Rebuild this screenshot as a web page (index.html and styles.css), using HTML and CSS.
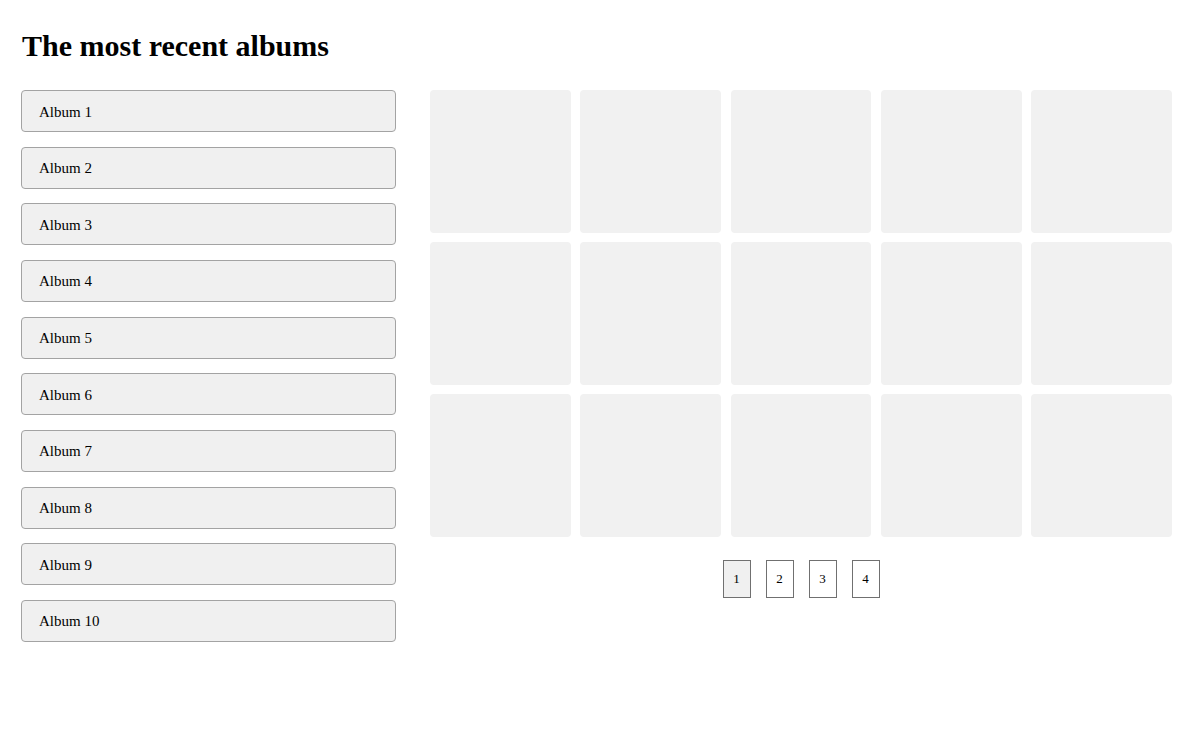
FILE: index.html
```html
<!DOCTYPE html>
<html>
<head>
<meta charset="utf-8">
<link rel="stylesheet" href="styles.css">
</head>
<body>
<div class="page">
  <h1 class="title">The most recent albums</h1>
  <div class="layout">
    <div class="album-list">
      <button class="album-btn">Album 1</button>
      <button class="album-btn">Album 2</button>
      <button class="album-btn">Album 3</button>
      <button class="album-btn">Album 4</button>
      <button class="album-btn">Album 5</button>
      <button class="album-btn">Album 6</button>
      <button class="album-btn">Album 7</button>
      <button class="album-btn">Album 8</button>
      <button class="album-btn">Album 9</button>
      <button class="album-btn">Album 10</button>
    </div>
    <div class="gallery">
      <div class="grid">
        <div class="tile"></div><div class="tile"></div><div class="tile"></div><div class="tile"></div><div class="tile"></div>
        <div class="tile"></div><div class="tile"></div><div class="tile"></div><div class="tile"></div><div class="tile"></div>
        <div class="tile"></div><div class="tile"></div><div class="tile"></div><div class="tile"></div><div class="tile"></div>
      </div>
      <div class="pager">
        <button class="page-btn active">1</button>
        <button class="page-btn">2</button>
        <button class="page-btn">3</button>
        <button class="page-btn">4</button>
      </div>
    </div>
  </div>
</div>
</body>
</html>
```
FILE: styles.css
```css
html, body {
  margin: 0;
  padding: 0;
  background: #fff;
}
body {
  font-family: "Liberation Serif", "Times New Roman", serif;
  color: #000;
}
.page {
  padding: 22px 23px 0 22px;
}
.title {
  margin: 0 0 28px 0;
  font-size: 30px;
  font-weight: bold;
  line-height: 47px;
  height: 40px;
}
.layout {
  display: flex;
  gap: 34px;
  align-items: flex-start;
}
.album-list {
  width: 375px;
  margin-left: -1px;
  display: flex;
  flex-direction: column;
  gap: 14.67px;
  flex-shrink: 0;
}
.album-btn {
  display: block;
  width: 100%;
  height: 42px;
  padding: 2px 17px 0 17px;
  text-align: left;
  font-family: "Liberation Serif", "Times New Roman", serif;
  font-size: 15px;
  color: #000;
  background: #f0f0f0;
  border: 1px solid #a3a3a3;
  border-radius: 4px;
}
.gallery {
  flex: 1;
  display: flex;
  flex-direction: column;
  align-items: center;
}
.grid {
  width: 100%;
  display: grid;
  grid-template-columns: repeat(5, 1fr);
  grid-auto-rows: 143px;
  gap: 9px 9.5px;
}
.tile {
  background: #f1f1f1;
  border-radius: 4px;
}
.pager {
  margin-top: 23px;
  display: flex;
  gap: 15px;
}
.page-btn {
  width: 28px;
  height: 38px;
  padding: 0;
  font-family: "Liberation Serif", "Times New Roman", serif;
  font-size: 13px;
  color: #000;
  background: #fff;
  border: 1px solid #707070;
  border-radius: 0;
}
.page-btn.active {
  background: #f0f0f0;
}
```
